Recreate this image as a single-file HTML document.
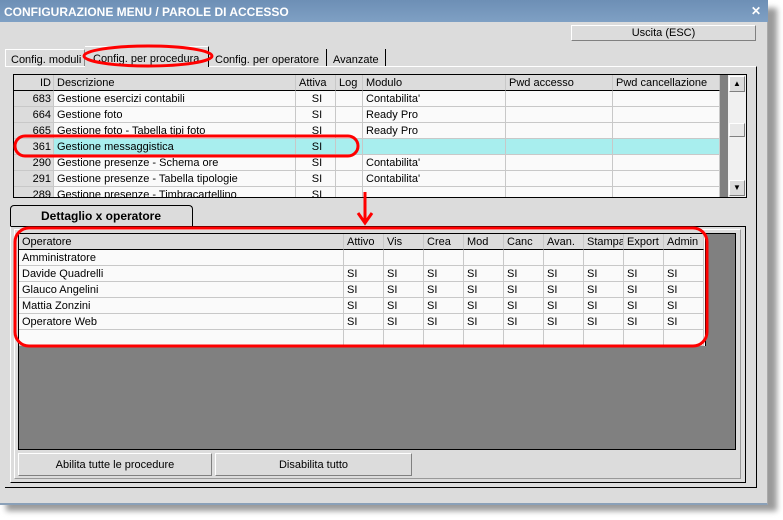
<!DOCTYPE html>
<html><head><meta charset="utf-8"><style>
*{margin:0;padding:0;box-sizing:border-box}
body{width:783px;height:520px;background:#fff;position:relative;overflow:hidden;font-family:"Liberation Sans",sans-serif;font-size:11px;color:#000}
.a{position:absolute}
.t{position:absolute;white-space:nowrap;line-height:16px}
.cell{position:absolute;border-right:1px solid #c8c8c8;border-bottom:1px solid #c8c8c8;padding-left:3px;line-height:17px;white-space:nowrap;overflow:hidden}
.hd{background:#dcdcdc}
.btn{position:absolute;background:#dcdcdc;border:1px solid;border-color:#fff #808080 #808080 #fff;text-align:center;font-size:11px}
</style></head><body>
<div class="a" style="left:6px;top:8px;width:771px;height:503px;background:#9a9a9a;filter:blur(3px)"></div>
<div class="a" style="left:0;top:0;width:768px;height:505px;background:#dcdcdc;border-right:1px solid #aaa;border-bottom:2px solid #8aa0b8"></div>
<div class="a" style="left:0;top:0;width:768px;height:22px;background:linear-gradient(#6d8fb5,#7fa0c4)"></div>
<div class="t" style="left:4px;top:5px;color:#fff;font-weight:bold;font-size:12px;line-height:14px">CONFIGURAZIONE MENU / PAROLE DI ACCESSO</div>
<div class="a" style="left:751px;top:6px;width:11px;height:11px;color:#fff;font-weight:bold;font-size:12px;line-height:11px">✕</div>
<div class="btn" style="left:571px;top:25px;width:185px;height:16px;line-height:15px">Uscita (ESC)</div>
<div class="a" style="left:5px;top:66px;width:752px;height:422px;border-top:1px solid #fff;border-right:1px solid #000;border-bottom:1px solid #000"></div>
<div class="a" style="left:5px;top:49px;width:80px;height:17px;border-left:1px solid #fff;border-top:1px solid #fff;border-right:1px solid #888"></div>
<div class="t" style="left:11px;top:52px">Config. moduli</div>
<div class="a" style="left:85px;top:46px;width:124px;height:21px;background:#dcdcdc;border-top:1px solid #fff;border-right:1px solid #000"></div>
<div class="t" style="left:93px;top:51px">Config. per procedura</div>
<div class="a" style="left:209px;top:49px;width:118px;height:17px;border-right:1px solid #000"></div>
<div class="t" style="left:215px;top:52px">Config. per operatore</div>
<div class="a" style="left:327px;top:49px;width:59px;height:17px;border-right:1px solid #000"></div>
<div class="t" style="left:333px;top:52px">Avanzate</div>
<div class="a" style="left:13px;top:74px;width:734px;height:124px;border:1px solid #000;background:#fafafa;overflow:hidden">
 <div class="a" style="left:706px;top:0;width:8px;height:122px;background:#808080"></div>
 <div class="a" style="left:714px;top:0;width:18px;height:122px;background:#f0f0f0"></div>
 <div class="btn" style="left:715px;top:1px;width:16px;height:16px;font-size:8px;line-height:14px">▲</div>
 <div class="btn" style="left:715px;top:105px;width:16px;height:16px;font-size:8px;line-height:14px">▼</div>
 <div class="btn" style="left:715px;top:48px;width:16px;height:14px;background:#e8e8e8"></div>
 <div id="g1"></div>
</div>
<div class="a" style="left:10px;top:205px;width:183px;height:22px;background:#dcdcdc;border:1px solid #000;border-bottom:none;border-radius:4px 4px 0 0"></div>
<div class="t" style="left:41px;top:208px;font-weight:bold;font-size:12px">Dettaglio x operatore</div>
<div class="a" style="left:10px;top:226px;width:736px;height:257px;border-top:1px solid #000;border-right:1px solid #000;border-bottom:1px solid #000;border-left:1px solid #fff"></div>
<div class="a" style="left:14px;top:229px;width:727px;height:250px;border:1px solid #fff;border-right-color:#999;border-bottom-color:#999"></div>
<div class="a" style="left:18px;top:233px;width:718px;height:217px;background:#808080;border:1px solid #000"></div>
<div class="a" style="left:18px;top:233px;width:688px;height:113px;background:#fafafa;border-top:1px solid #000;border-left:1px solid #000;border-right:1px solid #000;overflow:hidden"><div id="g2"></div></div>
<div class="btn" style="left:18px;top:453px;width:194px;height:23px;line-height:22px">Abilita tutte le procedure</div>
<div class="btn" style="left:215px;top:453px;width:197px;height:23px;line-height:22px">Disabilita tutto</div>
<svg class="a" style="left:0;top:0" width="783" height="520">
<g fill="none" stroke="#f00" stroke-width="3">
<ellipse cx="148" cy="56" rx="64" ry="10"/>
<rect x="15" y="136" width="343" height="20" rx="10"/>
<rect x="15" y="228" width="692" height="118" rx="14"/>
<line x1="365" y1="192" x2="365" y2="222"/>
<polyline points="358,213 365,223 372,213"/>
</g></svg>
<script>
function grid(id,cols,rows,hl,rowh,hdh){
 var h='',x=0,g=document.getElementById(id);
 cols.forEach(function(c,i){
  h+='<div class="cell hd" style="left:'+x+'px;top:0;width:'+c[1]+'px;height:'+hdh+'px;border-bottom-color:#000;'+(c[2]=='r'?'text-align:right;padding-right:2px':'')+'">'+c[0]+'</div>';
  rows.forEach(function(r,j){
   var bg=(hl===j&&i>0)?'background:#a8eeee;':'';
   if(i==0&&c[2]=='r')bg+='background:#dcdcdc;';
   h+='<div class="cell" style="'+bg+'left:'+x+'px;top:'+(hdh+j*rowh)+'px;width:'+c[1]+'px;height:'+rowh+'px;'+(c[2]=='r'?'text-align:right;padding-right:2px;':'')+(c[2]=='c'?'text-align:center;':'')+'">'+(r[i]||'')+'</div>';
  });
  x+=c[1];
 });
 g.innerHTML=h;
}
grid('g1',[['ID',40,'r'],['Descrizione',242],['Attiva',40,'c'],['Log',27],['Modulo',143],['Pwd accesso',107],['Pwd cancellazione',107]],
[['683','Gestione esercizi contabili','SI','','Contabilita\''],['664','Gestione foto','SI','','Ready Pro'],['665','Gestione foto - Tabella tipi foto','SI','','Ready Pro'],['361','Gestione messaggistica','SI','',''],['290','Gestione presenze - Schema ore','SI','','Contabilita\''],['291','Gestione presenze - Tabella tipologie','SI','','Contabilita\''],['289','Gestione presenze - Timbracartellino','SI','','']],3,16,16);
var s=['SI','SI','SI','SI','SI','SI','SI','SI','SI'];
grid('g2',[['Operatore',325],['Attivo',40],['Vis',40],['Crea',40],['Mod',40],['Canc',40],['Avan.',40],['Stampa',40],['Export',40],['Admin',40]],
[['Amministratore'],['Davide Quadrelli'].concat(s),['Glauco Angelini'].concat(s),['Mattia Zonzini'].concat(s),['Operatore Web'].concat(s),['']],-1,16,16);
</script>
</body></html>
